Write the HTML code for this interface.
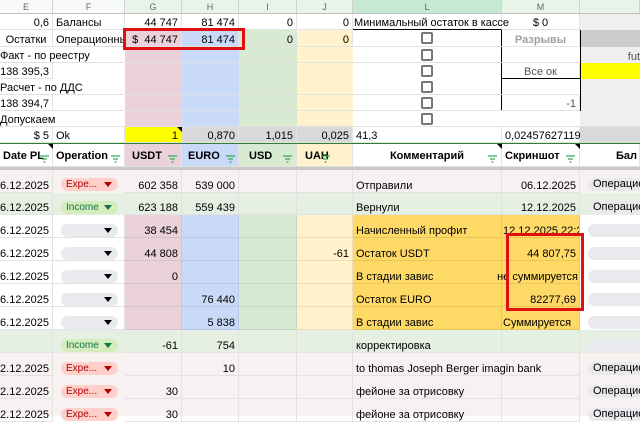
<!DOCTYPE html>
<html><head><meta charset="utf-8"><style>
*{box-sizing:border-box;margin:0;padding:0}
body{width:640px;height:416px;overflow:hidden;background:#fff;font-family:"Liberation Sans",Arial,sans-serif;font-size:11px;color:#000;position:relative}
.c{position:absolute;border-right:1px solid #e2e2e2;border-bottom:1px solid #e2e2e2;white-space:nowrap;overflow:visible;padding:0 3px;display:flex;align-items:flex-end;line-height:12px;padding-bottom:0}
.r{justify-content:flex-end}.m{justify-content:center}
.h{position:absolute;top:0;height:14px;font-size:9px;color:#666;text-align:center;line-height:14px;border-right:1px solid #d0d0d0;border-bottom:1px solid #c0c0c0}
.cb{position:absolute;width:12px;height:12px;border:2px solid #777;border-radius:2px;left:421px}
.chip{position:absolute;left:61px;width:57px;height:13px;border-radius:7px;font-size:10px;line-height:13px;padding-left:5px}
.chip i{position:absolute;right:6px;top:4px;width:0;height:0;border-left:4px solid transparent;border-right:4px solid transparent;border-top:5px solid #000}
.ex{background:#ffcfc9;color:#b10202}.ex i{border-top-color:#b10202}
.in{background:#d4edbc;color:#11734b}.in i{border-top-color:#11734b}
.em{background:#e8eaed}
.nc{position:absolute;left:588px;width:60px;height:13px;border-radius:7px;background:#e8eaed;line-height:13px;padding-left:5px}
.b{font-weight:bold}
</style></head><body>
<div class="h" style="left:0;width:53px;background:#f8f9fa">E</div>
<div class="h" style="left:53px;width:72px;background:#f8f9fa">F</div>
<div class="h" style="left:125px;width:57px;background:#e6f4ea">G</div>
<div class="h" style="left:182px;width:57px;background:#e6f4ea">H</div>
<div class="h" style="left:239px;width:58px;background:#e6f4ea">I</div>
<div class="h" style="left:297px;width:56px;background:#e6f4ea">J</div>
<div class="h" style="left:353px;width:149px;background:#c6e9d2">L</div>
<div class="h" style="left:502px;width:78px;background:#e6f4ea">M</div>
<div class="h" style="left:580px;width:60px;background:#e6f4ea"></div>

<div style="position:absolute;left:125px;top:30px;width:57px;height:97px;background:#ead1dc"></div>
<div style="position:absolute;left:182px;top:30px;width:57px;height:97px;background:#c9daf8"></div>
<div style="position:absolute;left:239px;top:30px;width:58px;height:97px;background:#d9ead3"></div>
<div style="position:absolute;left:297px;top:30px;width:56px;height:97px;background:#fff2cc"></div>
<div style="position:absolute;left:580px;top:14px;width:60px;height:16px;background:#efefef"></div>
<div style="position:absolute;left:580px;top:30px;width:60px;height:17px;background:#cccccc"></div>
<div style="position:absolute;left:580px;top:47px;width:60px;height:16px;background:#efefef;text-align:right;font-size:11px;padding-top:4px;color:#555">fut</div>
<div style="position:absolute;left:580px;top:63px;width:60px;height:16px;background:#ffff00"></div>
<div style="position:absolute;left:580px;top:79px;width:60px;height:64px;background:#efefef"></div>

<div class="c r" style="left:0;top:14px;width:53px;height:16px">0,6</div>
<div class="c" style="left:53px;top:14px;width:72px;height:16px">Балансы</div>
<div class="c r" style="left:125px;top:14px;width:57px;height:16px">44 747</div>
<div class="c r" style="left:182px;top:14px;width:57px;height:16px">81 474</div>
<div class="c r" style="left:239px;top:14px;width:58px;height:16px">0</div>
<div class="c r" style="left:297px;top:14px;width:56px;height:16px">0</div>
<div class="c" style="left:353px;top:14px;width:149px;height:16px;border-bottom:1px solid #000;padding-left:1px">Минимальный остаток в кассе</div>
<div class="c m" style="left:502px;top:14px;width:78px;height:16px">$ 0</div>
<div class="c m" style="left:0;top:30px;width:53px;height:17px">Остатки</div>
<div class="c" style="left:53px;top:30px;width:72px;height:17px;overflow:hidden">Операционны</div>
<div class="c r" style="left:125px;top:30px;width:57px;height:17px;background:#ead1dc">$&nbsp;&nbsp;44 747</div>
<div class="c r" style="left:182px;top:30px;width:57px;height:17px;background:#c9daf8">81 474</div>
<div class="c r" style="left:239px;top:30px;width:58px;height:17px;background:#d9ead3">0</div>
<div class="c r" style="left:297px;top:30px;width:56px;height:17px;background:#fff2cc">0</div>
<div class="c m b" style="left:502px;top:30px;width:78px;height:17px;color:#a0a0a0">Разрывы</div>
<div class="c" style="left:-3px;top:47px;width:128px;height:16px;border-right:0">Факт - по реестру</div>
<div class="c r" style="left:0;top:63px;width:53px;height:16px">138 395,3</div>
<div class="c" style="left:-3px;top:79px;width:128px;height:16px;border-right:0">Расчет - по ДДС</div>
<div class="c r" style="left:0;top:95px;width:53px;height:16px">138 394,7</div>
<div class="c" style="left:-3px;top:111px;width:128px;height:16px;border-right:0">Допускаем</div>
<div class="c m" style="left:502px;top:63px;width:78px;height:16px;color:#555">Все ок</div>
<div class="c r" style="left:502px;top:95px;width:78px;height:16px;color:#555">-1</div>
<div style="position:absolute;left:501px;top:30px;width:80px;height:81px;border:1px solid #000;border-top:0"></div>
<div style="position:absolute;left:501px;top:78px;width:80px;height:1px;background:#000"></div>
<div style="position:absolute;left:0;top:46px;width:580px;height:1px;background:#e2e2e2"></div>
<div style="position:absolute;left:0;top:62px;width:580px;height:1px;background:#e2e2e2"></div>
<div style="position:absolute;left:0;top:94px;width:580px;height:1px;background:#e2e2e2"></div>
<div style="position:absolute;left:0;top:110px;width:580px;height:1px;background:#e2e2e2"></div>
<div style="position:absolute;left:0;top:126px;width:640px;height:1px;background:#e2e2e2"></div>
<div class="cb" style="top:32px"></div><div class="cb" style="top:49px"></div><div class="cb" style="top:65px"></div><div class="cb" style="top:81px"></div><div class="cb" style="top:97px"></div><div class="cb" style="top:113px"></div>
<div class="c r" style="left:0;top:127px;width:53px;height:16px">$ 5</div>
<div class="c" style="left:53px;top:127px;width:72px;height:16px">Ok</div>
<div class="c r" style="left:125px;top:127px;width:57px;height:16px;background:#ffff00">1</div>
<div class="c r" style="left:182px;top:127px;width:57px;height:16px;background:#d9d9d9">0,870</div>
<div class="c r" style="left:239px;top:127px;width:58px;height:16px;background:#d9d9d9">1,015</div>
<div class="c r" style="left:297px;top:127px;width:56px;height:16px;background:#d9d9d9">0,025</div>
<div class="c" style="left:353px;top:127px;width:149px;height:16px">41,3</div>
<div class="c" style="left:502px;top:127px;width:78px;height:16px">0,02457627119</div>
<div style="position:absolute;left:580px;top:127px;width:60px;height:16px;background:#d9d9d9"></div>
<div style="position:absolute;left:177px;top:127px;border-left:5px solid transparent;border-top:5px solid #000"></div>
<div style="position:absolute;left:0;top:143px;width:640px;height:1px;background:#2e7d32"></div>
<div style="position:absolute;left:123px;top:28px;width:122px;height:22px;border:3px solid #e01010"></div>

<div class="c b" style="left:0;top:144px;width:53px;height:23px;padding-bottom:4px">Date PL</div>
<div class="c b" style="left:53px;top:144px;width:72px;height:23px;padding-bottom:4px">Operation</div>
<div class="c b" style="left:125px;top:144px;width:57px;height:23px;background:#ead1dc;padding-bottom:4px;padding-left:7px">USDT</div>
<div class="c b" style="left:182px;top:144px;width:57px;height:23px;background:#c9daf8;padding-bottom:4px;padding-left:6px">EURO</div>
<div class="c b" style="left:239px;top:144px;width:58px;height:23px;background:#d9ead3;padding-bottom:4px;padding-left:10px">USD</div>
<div class="c b" style="left:297px;top:144px;width:56px;height:23px;background:#fff2cc;padding-bottom:4px;padding-left:8px">UAH</div>
<div class="c b m" style="left:353px;top:144px;width:149px;height:23px;padding-bottom:4px">Комментарий</div>
<div class="c b" style="left:502px;top:144px;width:78px;height:23px;padding-bottom:4px">Скриншот</div>
<div class="c b" style="left:580px;top:144px;width:60px;height:23px;padding-bottom:4px;padding-left:36px">Бал</div>
<div style="position:absolute;left:497px;top:144px;border-left:5px solid transparent;border-top:5px solid #000"></div>
<div style="position:absolute;left:575px;top:144px;border-left:5px solid transparent;border-top:5px solid #000"></div>
<div style="position:absolute;left:48px;top:144px;border-left:5px solid transparent;border-top:5px solid #000"></div>
<svg style="position:absolute;left:0;top:0" width="640" height="170">
<g stroke="#34a853" stroke-width="1.2" fill="none">
<path d="M40 156h9M42 159h5M43.5 162h2"/><path d="M111 156h9M113 159h5M114.5 162h2"/>
<path d="M168 156h9M170 159h5M171.5 162h2"/><path d="M226 156h9M228 159h5M229.5 162h2"/>
<path d="M283 156h9M285 159h5M286.5 162h2"/><path d="M321 156h9M323 159h5M324.5 162h2"/>
<path d="M488 156h9M490 159h5M491.5 162h2"/><path d="M566 156h9M568 159h5M569.5 162h2"/>
</g></svg>
<div style="position:absolute;left:0;top:167px;width:640px;height:3px;background:#c8c8c8"></div>

<div style="position:absolute;left:0;top:170px;width:640px;height:23px;background:#f7f1f1"></div>
<div class="c r" style="left:0;top:170px;width:53px;height:23px">06.12.2025</div>
<div class="chip ex" style="top:178px">Expe...<i></i></div>
<div class="c r" style="left:125px;top:170px;width:57px;height:23px">602 358</div>
<div class="c r" style="left:182px;top:170px;width:57px;height:23px">539 000</div>
<div class="c" style="left:239px;top:170px;width:58px;height:23px"></div>
<div class="c" style="left:297px;top:170px;width:56px;height:23px"></div>
<div class="c" style="left:353px;top:170px;width:149px;height:23px">Отправили</div>
<div class="c r" style="left:502px;top:170px;width:78px;height:23px">06.12.2025</div>
<div class="nc" style="top:178px">Операцио</div>
<div style="position:absolute;left:0;top:193px;width:640px;height:22px;background:#e5efe2"></div>
<div class="c r" style="left:0;top:193px;width:53px;height:22px">06.12.2025</div>
<div class="chip in" style="top:201px">Income<i></i></div>
<div class="c r" style="left:125px;top:193px;width:57px;height:22px">623 188</div>
<div class="c r" style="left:182px;top:193px;width:57px;height:22px">559 439</div>
<div class="c" style="left:239px;top:193px;width:58px;height:22px"></div>
<div class="c" style="left:297px;top:193px;width:56px;height:22px"></div>
<div class="c" style="left:353px;top:193px;width:149px;height:22px">Вернули</div>
<div class="c r" style="left:502px;top:193px;width:78px;height:22px">12.12.2025</div>
<div class="nc" style="top:201px">Операцио</div>
<div style="position:absolute;left:125px;top:215px;width:57px;height:115px;background:#ead1dc"></div>
<div style="position:absolute;left:182px;top:215px;width:57px;height:115px;background:#c9daf8"></div>
<div style="position:absolute;left:239px;top:215px;width:58px;height:115px;background:#d9ead3"></div>
<div style="position:absolute;left:297px;top:215px;width:56px;height:115px;background:#fff2cc"></div>
<div style="position:absolute;left:353px;top:215px;width:227px;height:115px;background:#ffd966"></div>

<div class="c r" style="left:0;top:215px;width:53px;height:23px">06.12.2025</div>
<div class="c" style="left:53px;top:215px;width:72px;height:23px"></div>
<div class="c r" style="left:125px;top:215px;width:57px;height:23px;border-color:#d6c0cb">38 454</div>
<div class="c" style="left:182px;top:215px;width:57px;height:23px;border-color:#b7c9e8"></div>
<div class="c" style="left:239px;top:215px;width:58px;height:23px;border-color:#c6d8c0"></div>
<div class="c" style="left:297px;top:215px;width:56px;height:23px;border-color:#eadfb9"></div>
<div class="c" style="left:353px;top:215px;width:149px;height:23px;border-color:#e8c65a">Начисленный профит</div>
<div class="c" style="left:502px;top:215px;width:78px;height:23px;border-color:#e8c65a;overflow:hidden;padding-left:1px">12.12.2025 22:2</div>

<div class="c r" style="left:0;top:238px;width:53px;height:23px">06.12.2025</div>
<div class="c" style="left:53px;top:238px;width:72px;height:23px"></div>
<div class="c r" style="left:125px;top:238px;width:57px;height:23px;border-color:#d6c0cb">44 808</div>
<div class="c" style="left:182px;top:238px;width:57px;height:23px;border-color:#b7c9e8"></div>
<div class="c" style="left:239px;top:238px;width:58px;height:23px;border-color:#c6d8c0"></div>
<div class="c r" style="left:297px;top:238px;width:56px;height:23px;border-color:#eadfb9">-61</div>
<div class="c" style="left:353px;top:238px;width:149px;height:23px;border-color:#e8c65a">Остаток USDT</div>
<div class="c r" style="left:502px;top:238px;width:78px;height:23px;border-color:#e8c65a">44 807,75</div>

<div class="c r" style="left:0;top:261px;width:53px;height:23px">06.12.2025</div>
<div class="c" style="left:53px;top:261px;width:72px;height:23px"></div>
<div class="c r" style="left:125px;top:261px;width:57px;height:23px;border-color:#d6c0cb">0</div>
<div class="c" style="left:182px;top:261px;width:57px;height:23px;border-color:#b7c9e8"></div>
<div class="c" style="left:239px;top:261px;width:58px;height:23px;border-color:#c6d8c0"></div>
<div class="c" style="left:297px;top:261px;width:56px;height:23px;border-color:#eadfb9"></div>
<div class="c" style="left:353px;top:261px;width:149px;height:23px;border-color:#e8c65a">В стадии завис</div>
<div class="c r" style="left:502px;top:261px;width:78px;height:23px;border-color:#e8c65a;padding-right:1px">не суммируется</div>

<div class="c r" style="left:0;top:284px;width:53px;height:23px">06.12.2025</div>
<div class="c" style="left:53px;top:284px;width:72px;height:23px"></div>
<div class="c" style="left:125px;top:284px;width:57px;height:23px;border-color:#d6c0cb"></div>
<div class="c r" style="left:182px;top:284px;width:57px;height:23px;border-color:#b7c9e8">76 440</div>
<div class="c" style="left:239px;top:284px;width:58px;height:23px;border-color:#c6d8c0"></div>
<div class="c" style="left:297px;top:284px;width:56px;height:23px;border-color:#eadfb9"></div>
<div class="c" style="left:353px;top:284px;width:149px;height:23px;border-color:#e8c65a">Остаток EURO</div>
<div class="c r" style="left:502px;top:284px;width:78px;height:23px;border-color:#e8c65a">82277,69</div>

<div class="c r" style="left:0;top:307px;width:53px;height:23px">06.12.2025</div>
<div class="c" style="left:53px;top:307px;width:72px;height:23px"></div>
<div class="c" style="left:125px;top:307px;width:57px;height:23px;border-color:#d6c0cb"></div>
<div class="c r" style="left:182px;top:307px;width:57px;height:23px;border-color:#b7c9e8">5 838</div>
<div class="c" style="left:239px;top:307px;width:58px;height:23px;border-color:#c6d8c0"></div>
<div class="c" style="left:297px;top:307px;width:56px;height:23px;border-color:#eadfb9"></div>
<div class="c" style="left:353px;top:307px;width:149px;height:23px;border-color:#e8c65a">В стадии завис</div>
<div class="c" style="left:502px;top:307px;width:78px;height:23px;border-color:#e8c65a;padding-left:1px">Суммируется</div>

<div class="chip em" style="top:224px"><i></i></div>
<div class="chip em" style="top:247px"><i></i></div>
<div class="chip em" style="top:270px"><i></i></div>
<div class="chip em" style="top:293px"><i></i></div>
<div class="chip em" style="top:316px"><i></i></div>
<div class="nc" style="top:224px"></div><div class="nc" style="top:247px"></div><div class="nc" style="top:270px"></div><div class="nc" style="top:293px"></div><div class="nc" style="top:316px"></div>
<div style="position:absolute;left:506px;top:233px;width:78px;height:78px;border:3px solid #e01010"></div>

<div style="position:absolute;left:0;top:330px;width:640px;height:23px;background:#e5efe2"></div>
<div class="c" style="left:0;top:330px;width:53px;height:23px"></div>
<div class="chip in" style="top:339px">Income<i></i></div>
<div class="c r" style="left:125px;top:330px;width:57px;height:23px">-61</div>
<div class="c r" style="left:182px;top:330px;width:57px;height:23px">754</div>
<div class="c" style="left:239px;top:330px;width:58px;height:23px"></div>
<div class="c" style="left:297px;top:330px;width:56px;height:23px"></div>
<div class="c" style="left:353px;top:330px;width:149px;height:23px">корректировка</div>
<div class="c" style="left:502px;top:330px;width:78px;height:23px"></div>
<div class="nc" style="top:339px"></div>

<div style="position:absolute;left:0;top:353px;width:640px;height:63px;background:#f7f1f1"></div>
<div class="c r" style="left:0;top:353px;width:53px;height:23px">12.12.2025</div>
<div class="chip ex" style="top:362px">Expe...<i></i></div>
<div class="c" style="left:125px;top:353px;width:57px;height:23px"></div>
<div class="c r" style="left:182px;top:353px;width:57px;height:23px">10</div>
<div class="c" style="left:239px;top:353px;width:58px;height:23px"></div>
<div class="c" style="left:297px;top:353px;width:56px;height:23px"></div>
<div class="c" style="left:353px;top:353px;width:227px;height:23px">to thomas Joseph Berger imagin bank</div>
<div class="nc" style="top:362px">Операцио</div>

<div class="c r" style="left:0;top:376px;width:53px;height:23px">12.12.2025</div>
<div class="chip ex" style="top:385px">Expe...<i></i></div>
<div class="c r" style="left:125px;top:376px;width:57px;height:23px">30</div>
<div class="c" style="left:182px;top:376px;width:57px;height:23px"></div>
<div class="c" style="left:239px;top:376px;width:58px;height:23px"></div>
<div class="c" style="left:297px;top:376px;width:56px;height:23px"></div>
<div class="c" style="left:353px;top:376px;width:149px;height:23px">фейоне за отрисовку</div>
<div class="c" style="left:502px;top:376px;width:78px;height:23px"></div>
<div class="nc" style="top:385px">Операцио</div>

<div class="c r" style="left:0;top:399px;width:53px;height:23px">12.12.2025</div>
<div class="chip ex" style="top:408px">Expe...<i></i></div>
<div class="c r" style="left:125px;top:399px;width:57px;height:23px">30</div>
<div class="c" style="left:182px;top:399px;width:57px;height:23px"></div>
<div class="c" style="left:239px;top:399px;width:58px;height:23px"></div>
<div class="c" style="left:297px;top:399px;width:56px;height:23px"></div>
<div class="c" style="left:353px;top:399px;width:149px;height:23px">фейоне за отрисовку</div>
<div class="c" style="left:502px;top:399px;width:78px;height:23px"></div>
<div class="nc" style="top:408px">Операцио</div>
</body></html>
